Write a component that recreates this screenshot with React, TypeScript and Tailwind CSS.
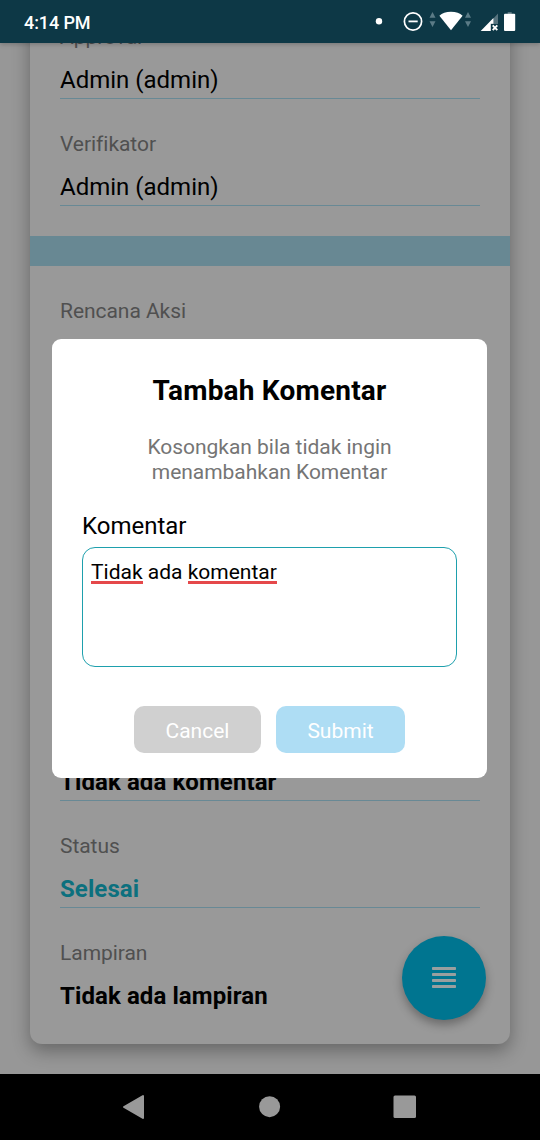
import type { ReactNode } from "react";

type FieldProps = { label?: string; value?: string; valueClass?: string; last?: boolean };

function Field({ label, value, valueClass = "text-black", last = false }: FieldProps) {
  return (
    <div className={`flex h-[107px] flex-col border-b pt-[31px] ${last ? "border-transparent" : "border-[#688995]"}`}>
      <span className="h-[28px] text-[21px] leading-[28px] tracking-[-0.05px] text-[#505050]">{label}</span>
      <span className={`mt-[14px] h-[30px] text-[24px] leading-[30px] ${valueClass}`}>{value}</span>
    </div>
  );
}

function StatusBar() {
  return (
    <header className="z-10 flex h-[43px] shrink-0 items-center justify-between bg-[#0d3846] pl-6 shadow-[0_1px_5px_rgba(0,0,0,0.25)]">
      <span className="pt-[2px] text-[18px] font-medium leading-[22px] tracking-[-0.1px] text-white">4:14 PM</span>
      <svg width="180" height="43" viewBox="0 0 180 43" fill="none">
        <circle cx="19" cy="21.2" r="3.2" fill="#fff" />
        <circle cx="53" cy="21.5" r="8.6" stroke="#fff" strokeWidth="1.7" />
        <path d="M48.5 21.4h9.2" stroke="#fff" strokeWidth="1.8" />
        <path d="M69.5 17.8 72.5 12l3 5.8zM69.5 21.3h6l-3 5.8zM105 17.8l3-5.8 3 5.8zM105 21.3h6l-3 5.8z" fill="#5b7b86" />
        <path d="M79.4 15.8C82 13.3 86 11.8 91 11.8s9 1.5 11.6 4L91 30.2z" fill="#fff" />
        <path d="M131 21 138 13.5V24h-7z" fill="#56737e" />
        <path d="M120.7 31 133.4 18v5.7H130.8V31z" fill="#fff" />
        <path d="m132.7 25.3 4.6 4.8m0-4.8-4.6 4.8" stroke="#fff" strokeWidth="1.9" />
        <path d="M147.7 12h4v2h-4z" fill="#56737e" />
        <rect x="144" y="13.8" width="11.2" height="17.3" rx="1" fill="#fff" />
      </svg>
    </header>
  );
}

function ActionButton({ className, children }: { className: string; children: ReactNode }) {
  return (
    <button className={`flex h-[47px] items-center justify-center rounded-[10px] pt-[4px] text-[21px] text-white ${className}`}>
      {children}
    </button>
  );
}

function CommentDialog() {
  return (
    <section className="absolute left-[52px] top-[296px] flex h-[439px] w-[435px] flex-col rounded-[9px] bg-white px-[30px]">
      <h2 className="mt-[35px] text-center text-[28px] font-bold leading-[34px] tracking-[0.2px] text-black">Tambah Komentar</h2>
      <p className="mt-[27px] text-center text-[21px] leading-[25px] tracking-[-0.03px] text-[#757575]">
        Kosongkan bila tidak ingin
        <br />
        menambahkan Komentar
      </p>
      <label className="mt-[26px] text-[24px] leading-[30px] text-black">Komentar</label>
      <div className="mt-[6px] h-[120px] rounded-[13px] border border-[#1ea0ad] px-[8px] pt-[12px] text-[21px] leading-[25px] text-black">
        <span className="inline-block h-[24px] border-b-[3px] border-[#e5484a]">Tidak</span> ada{" "}
        <span className="inline-block h-[24px] border-b-[3px] border-[#e5484a]">komentar</span>
      </div>
      <div className="mt-[39px] flex justify-center gap-[15px]">
        <ActionButton className="w-[127px] bg-[#d0d0d0]">Cancel</ActionButton>
        <ActionButton className="w-[129px] bg-[#aeddf4]">Submit</ActionButton>
      </div>
    </section>
  );
}

function NavBar() {
  return (
    <nav className="z-10 flex h-[66px] shrink-0 bg-black">
      <svg width="540" height="66" viewBox="0 0 540 66" fill="#999">
        <path d="M124 33 143 22v22z" stroke="#999" strokeWidth="2" strokeLinejoin="round" />
        <circle cx="269.6" cy="32.7" r="10.5" />
        <rect x="393.5" y="21.5" width="22.5" height="22.5" rx="1.5" />
      </svg>
    </nav>
  );
}

export default function App() {
  return (
    <div className="flex h-[1140px] w-[540px] flex-col overflow-hidden bg-[#979797] font-['Roboto',sans-serif]">
      <StatusBar />
      <main className="relative h-[1031px] shrink-0 overflow-hidden">
        <article className="mx-[30px] -mt-[51px] h-[1052px] rounded-[12px] bg-[#999] shadow-[0_7px_18px_rgba(0,0,0,0.32)]">
          <div className="px-[30px]">
            <Field label="Approval" value="Admin (admin)" />
            <Field label="Verifikator" value="Admin (admin)" />
          </div>
          <div className="mt-[30px] h-[30px] bg-[#688893]" />
          <div className="px-[30px]">
            <Field label="Rencana Aksi" />
            <div className="h-[321px]" />
            <Field value="Tidak ada komentar" valueClass="font-bold tracking-[0.09px] text-black" />
            <Field label="Status" value="Selesai" valueClass="font-bold tracking-[0.09px] text-[#0c707e]" />
            <Field label="Lampiran" value="Tidak ada lampiran" valueClass="font-bold tracking-[0.09px] text-black" last />
          </div>
        </article>
        <button aria-label="Menu" className="absolute left-[402px] top-[893px] flex size-[84px] items-center justify-center rounded-full bg-[#007590] shadow-[0_5px_10px_rgba(0,0,0,0.3)]">
          <svg width="24" height="22" viewBox="0 0 24 22" fill="#999f9f">
            <rect y="0" width="24" height="3" rx="0.7" />
            <rect y="6" width="24" height="3" rx="0.7" />
            <rect y="12" width="24" height="3" rx="0.7" />
            <rect y="18" width="24" height="3" rx="0.7" />
          </svg>
        </button>
        <CommentDialog />
      </main>
      <NavBar />
    </div>
  );
}
